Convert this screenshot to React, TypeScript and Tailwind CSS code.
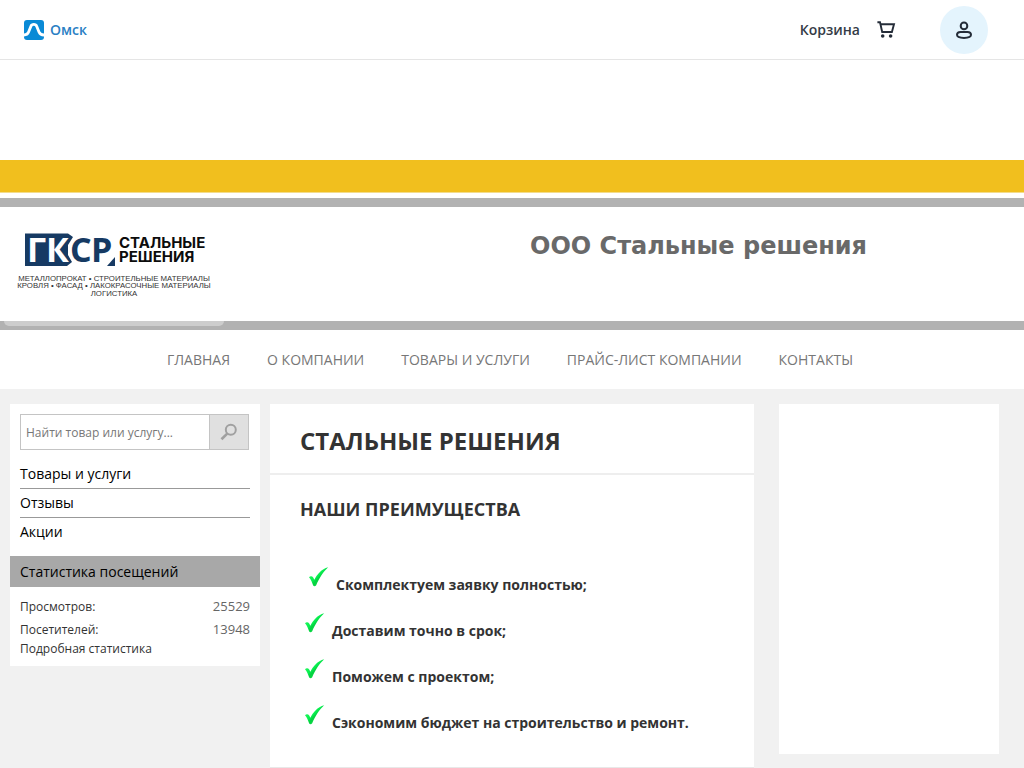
import type { ReactNode } from 'react'

const NAV = ['Главная', 'О компании', 'Товары и услуги', 'Прайс-лист компании', 'Контакты']

const MENU = ['Товары и услуги', 'Отзывы', 'Акции']

const STATS = [
  { label: 'Просмотров:', value: '25529' },
  { label: 'Посетителей:', value: '13948' },
]

const ADVANTAGES = [
  'Скомплектуем заявку полностью;',
  'Доставим точно в срок;',
  'Поможем с проектом;',
  'Сэкономим бюджет на строительство и ремонт.',
]

function CityIcon() {
  return (
    <svg width="20" height="20" viewBox="0 0 20 20" aria-hidden="true">
      <rect width="20" height="20" rx="3" fill="#0a8ad6" />
      <path
        d="M0 15c2.400 0 3.600-.6 4.600-3l2.200-5.600C7.400 4.900 8.200 4.400 9.800 4.400s2.400.5 3 2L15 12c1 2.400 2.400 3 5 3"
        fill="none"
        stroke="#fff"
        strokeWidth="2.800"
      />
    </svg>
  )
}

function CartIcon() {
  return (
    <svg width="20" height="20" viewBox="0 0 20 20" fill="none" stroke="#242c38" aria-hidden="true">
      <path d="M1.400 2.200H4l2.200 9.800h9.700L18 4.200H4.600" strokeWidth="1.900" />
      <circle cx="6.700" cy="16" r="1.800" fill="#242c38" stroke="none" />
      <circle cx="14.600" cy="16" r="1.800" fill="#242c38" stroke="none" />
    </svg>
  )
}

function UserIcon() {
  return (
    <svg width="20" height="20" viewBox="0 0 20 20" fill="none" stroke="#242c38" strokeWidth="2" aria-hidden="true">
      <circle cx="10" cy="5.900" r="3.300" />
      <path d="M6.500 11.900h7c2 0 3.500 1.300 3.500 2.900 0 2.300-3.300 3.100-7 3.100s-7-.8-7-3.100c0-1.600 1.500-2.900 3.500-2.900z" />
    </svg>
  )
}

function SearchIcon() {
  return (
    <svg width="18" height="18" viewBox="0 0 18 18" fill="none" stroke="#a0a0a0" aria-hidden="true">
      <circle cx="10.800" cy="6.800" r="5" strokeWidth="2" />
      <path d="M7.200 10.600L1.500 16.200" strokeWidth="2.600" />
    </svg>
  )
}

function CheckIcon() {
  return (
    <svg width="20" height="20" viewBox="0 0 20 20" aria-hidden="true">
      <defs>
        <linearGradient id="check" x1="0" y1="0" x2="1" y2="1">
          <stop offset="0" stopColor="#3dff6a" />
          <stop offset="0.450" stopColor="#08f050" />
          <stop offset="0.550" stopColor="#04d040" />
          <stop offset="1" stopColor="#20f550" />
        </linearGradient>
      </defs>
      <path
        d="M0 10.200c1.400-1.400 3.200-1.200 4.200.4l1.200 2.200C8 7.400 12.400 2 19.200.2 14.600 4.200 10.200 11 7.200 18.200c-.8 1.200-2.400 1.400-3 .2C3 15.600 2 12.400 0 10.200z"
        fill="url(#check)"
      />
    </svg>
  )
}

function Logo() {
  return (
    <svg width="200" height="80" viewBox="0 -6 200 80" role="img" aria-label="ГКСР Стальные решения">
      <path d="M11 5.500h43l5 3.500-5 8v10l4 7-5 4H11z" fill="#163a63" />
      <path d="M101 29v9h-8z" fill="#163a63" />
      <g fontFamily="'Open Sans', sans-serif" fontWeight="700" fontSize="34">
        <text x="13" y="34" fill="#fff">Г</text>
        <text x="32" y="34" fill="#fff">К</text>
        <text x="56" y="34" fill="#163a63">С</text>
        <text x="77" y="34" fill="#163a63">Р</text>
      </g>
      <g fontFamily="Inter, 'Liberation Sans', sans-serif" fontWeight="700" fontSize="15" fill="#0c0c0c">
        <text x="105" y="20">СТАЛЬНЫЕ</text>
        <text x="105" y="34">РЕШЕНИЯ</text>
      </g>
      <g fontFamily="'Liberation Sans', Arial, sans-serif" fontSize="7.800" fill="#333" textAnchor="middle">
        <text x="100" y="53">МЕТАЛЛОПРОКАТ • СТРОИТЕЛЬНЫЕ МАТЕРИАЛЫ</text>
        <text x="100" y="60">КРОВЛЯ • ФАСАД • ЛАКОКРАСОЧНЫЕ МАТЕРИАЛЫ</text>
        <text x="100" y="68">ЛОГИСТИКА</text>
      </g>
    </svg>
  )
}

function Card({ children, className = '' }: { children?: ReactNode, className?: string }) {
  return <div className={`bg-white ${className}`}>{children}</div>
}

export default function App() {
  return (
    <div className="min-h-screen bg-[#f1f1f1] font-['Open_Sans',sans-serif] text-[#333]">
      <header className="flex h-15 items-center justify-between border-b border-[#e5e5e5] bg-white pr-9 pl-6">
        <a href="#" className="flex items-center gap-1.5 text-sm font-semibold text-[#2a80c4]">
          <CityIcon />
          Омск
        </a>
        <div className="flex items-center gap-11">
          <a href="#" className="flex items-center gap-4 text-sm font-semibold text-[#343b46]">
            Корзина
            <CartIcon />
          </a>
          <button aria-label="Профиль" className="flex size-12 items-center justify-center rounded-full bg-[#e4f4fd]">
            <UserIcon />
          </button>
        </div>
      </header>

      <div className="bg-white pt-25">
        <div className="h-[33px] border-b border-[#f3dc8c] bg-[#f1bf1e]" />
        <div className="relative mt-[5px] flex min-h-33 items-start border-t-[9px] border-b-[9px] border-[#b2b2b2]">
          <a href="#" className="mt-[15px] ml-3.5 shrink-0">
            <Logo />
          </a>
          <div className="flex-1 pt-[21px] pl-[316px] font-['DejaVu_Sans',Verdana,sans-serif] text-2xl leading-9 font-bold text-[#696969]">
            ООО Стальные решения
          </div>
          <div className="absolute top-full left-1 h-[5px] w-55 rounded-b-lg bg-[#cdcdcd]" />
        </div>
        <nav className="flex h-[59px] items-center justify-center gap-[37px] pr-1 text-sm text-[#777] uppercase">
          {NAV.map(item => (
            <a key={item} href="#">{item}</a>
          ))}
        </nav>
      </div>

      <div className="flex items-start pt-[15px] pr-[25px] pl-2.5">
        <Card className="mr-2.5 w-[250px] shrink-0 pt-2.5 pb-[9px]">
          <form className="mx-2.5 flex h-9 w-[229px] border border-[#c4c4c4]">
            <input
              type="text"
              aria-label="Поиск"
              placeholder="Найти товар или услугу..."
              className="min-w-0 flex-1 px-[5px] pt-0.5 text-xs outline-none placeholder:text-[#777]"
            />
            <button type="button" aria-label="Найти" className="flex w-[39px] items-center justify-center border-l border-[#c4c4c4] bg-[#e0e0e0]">
              <SearchIcon />
            </button>
          </form>
          <ul className="mx-2.5 mt-2.5 text-sm text-black">
            {MENU.map(item => (
              <li key={item} className="border-b border-[#999] py-1 last:border-b-0">
                <a href="#">{item}</a>
              </li>
            ))}
          </ul>
          <h3 className="mt-2.5 bg-[#a8a8a8] px-2.5 text-sm leading-[31px] text-black">Статистика посещений</h3>
          <dl className="mt-2 px-2.5">
            {STATS.map(s => (
              <div key={s.label} className="flex items-center justify-between leading-[23px]">
                <dt className="text-xs">{s.label}</dt>
                <dd className="text-[13px] text-[#666]">{s.value}</dd>
              </div>
            ))}
          </dl>
          <a href="#" className="block px-2.5 text-xs leading-4">Подробная статистика</a>
        </Card>

        <Card className="mr-[25px] min-w-0 flex-1">
          <h1 className="border-b-2 border-[#eee] px-[30px] pt-5 pb-[15px] text-2xl leading-[34px] font-bold uppercase">
            Стальные решения
          </h1>
          <div className="border-b border-[#e8e8e8] px-[30px] pt-[21px] pb-4">
            <h2 className="mb-[45px] text-lg leading-[26px] font-bold uppercase">Наши преимущества</h2>
            <ul className="text-sm font-bold">
              {ADVANTAGES.map(item => (
                <li key={item} className="flex h-[46px] items-start gap-[7px] pl-[5px] first:pl-[9px]">
                  <CheckIcon />
                  <span className="pt-2">{item}</span>
                </li>
              ))}
            </ul>
          </div>
        </Card>

        <Card className="h-[350px] w-55 shrink-0" />
      </div>
    </div>
  )
}
